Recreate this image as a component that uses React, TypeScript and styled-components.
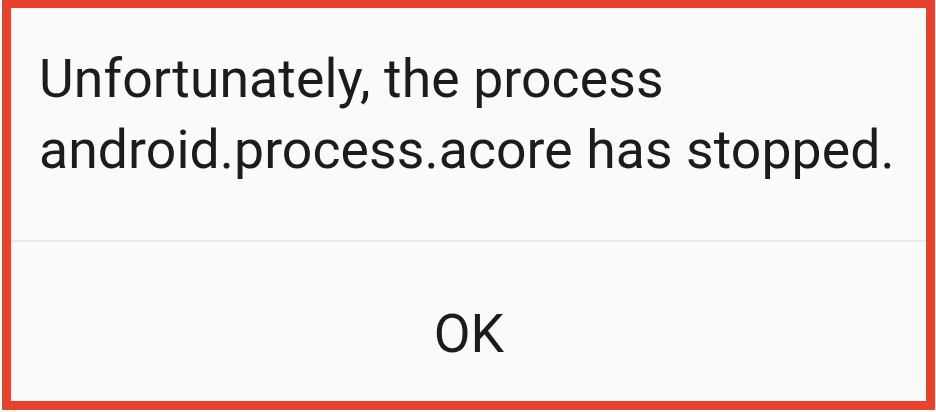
import styled, { createGlobalStyle } from "styled-components"

export default function App() {
  return (
    <>
      <GlobalStyle />
      <Frame>
        <Message>
          Unfortunately, the process
          <br />
          android.process.acore has stopped.
        </Message>
        <Divider />
        <ButtonRow>
          <OkButton>OK</OkButton>
        </ButtonRow>
      </Frame>
    </>
  )
}

const GlobalStyle = createGlobalStyle`
  html, body {
    margin: 0;
    padding: 0;
    background: #ffffff;
  }
  body {
    font-family: Roboto, "Noto Sans", sans-serif;
  }
`
const Frame = styled.div`
  box-sizing: border-box;
  width: 933px;
  height: 410px;
  margin: 0 1px 2px 2px;
  border: 9px solid #e8412c;
  border-top-width: 8px;
  background: #fafafa;
  display: flex;
  flex-direction: column;
`
const Message = styled.div`
  padding: 35px 20px 0 28px;
  height: 232px;
  box-sizing: border-box;
  font-size: 53.5px;
  line-height: 71px;
  letter-spacing: 0.1px;
  color: #1c1c1c;
  white-space: nowrap;
`
const Divider = styled.div`
  height: 2px;
  background: #ebebeb;
`
const ButtonRow = styled.div`
  flex: 1;
  display: flex;
  justify-content: center;
  padding-top: 56px;
  box-sizing: border-box;
`
const OkButton = styled.div`
  font-size: 53.5px;
  line-height: 71px;
  height: 71px;
  color: #1c1c1c;
  margin-left: 1px;
`
